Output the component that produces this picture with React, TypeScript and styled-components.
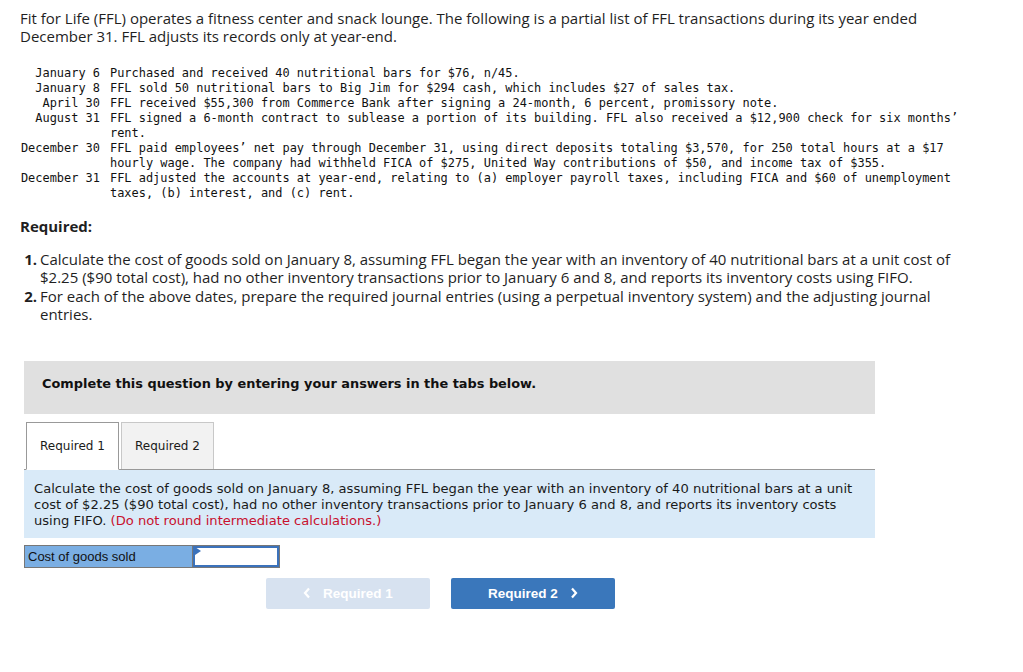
import React from "react";
import styled, { createGlobalStyle } from "styled-components";

const Global = createGlobalStyle`
  html, body { margin: 0; padding: 0; background: #fff; }
  body { font-family: "Open Sans", "Liberation Sans", sans-serif; color: #1f1f1f; }
`;

const Page = styled.div`
  padding: 9px 0 40px 20px;
  width: 970px;
`;

const Intro = styled.p`
  margin: 0;
  font-size: 15px;
  line-height: 18px;
  width: 940px;
`;

const TxTable = styled.div`
  margin-top: 21px;
  display: grid;
  grid-template-columns: 80px 860px;
  column-gap: 10px;
  font-family: "DejaVu Sans Mono", "Liberation Mono", monospace;
  font-size: 11.95px;
  line-height: 15px;
  color: #111;
`;

const TxDate = styled.div`
  text-align: right;
  white-space: nowrap;
`;

const TxText = styled.div``;

const ReqHead = styled.div`
  margin-top: 16px;
  font-size: 15px;
  line-height: 18px;
  font-weight: 700;
`;

const ReqList = styled.div`
  margin-top: 15px;
  margin-left: 4px;
  display: grid;
  grid-template-columns: 13px 1fr;
  column-gap: 3px;
  font-size: 15px;
  line-height: 18.4px;
  width: 940px;
`;

const ReqNum = styled.div`
  font-weight: 700;
  text-align: right;
`;

const ReqText = styled.div``;

const Work = styled.div`
  margin-top: 37px;
  margin-left: 4px;
  width: 851px;
`;

const Banner = styled.div`
  background: #e0e0e0;
  padding: 15px 18px 22px;
  height: 16px;
  font-family: "DejaVu Sans", Verdana, sans-serif;
  font-weight: 700;
  font-size: 12.9px;
  line-height: 16px;
  color: #111;
`;

const Tabs = styled.div`
  margin-top: 8px;
  display: flex;
  align-items: flex-end;
  padding-left: 2px;
  border-bottom: 1px solid #999;
  height: 47px;
`;

const Tab = styled.div<{ $active?: boolean }>`
  box-sizing: border-box;
  width: 93px;
  height: ${(p) => (p.$active ? "48px" : "47px")};
  margin-bottom: ${(p) => (p.$active ? "-1px" : "0")};
  margin-right: 2px;
  display: flex;
  align-items: center;
  justify-content: center;
  font-family: "DejaVu Sans", Verdana, sans-serif;
  font-size: 12px;
  color: #1a1a1a;
  background: ${(p) => (p.$active ? "#fff" : "#f2f2f2")};
  border: 1px solid ${(p) => (p.$active ? "#999" : "#c8c8c8")};
  border-bottom: ${(p) => (p.$active ? "1px solid #fff" : "none")};
`;

const Panel = styled.div`
  background: #d9eaf8;
  padding: 11px 10px 9px;
  font-family: "DejaVu Sans", Verdana, sans-serif;
  font-size: 13.1px;
  line-height: 16px;
  color: #1a1a1a;
`;

const Note = styled.span`
  color: #c8102e;
`;

const AnswerRow = styled.div`
  margin-top: 7px;
  display: flex;
  width: 256px;
  height: 23px;
  box-sizing: border-box;
  border: 1px solid #777;
`;

const AnswerLabel = styled.div`
  box-sizing: border-box;
  width: 168px;
  background: #7aaee3;
  border-right: 1px solid #777;
  font-family: "Liberation Sans", Arial, sans-serif;
  font-size: 13px;
  line-height: 21px;
  padding-left: 3px;
  color: #111;
`;

const AnswerCell = styled.div`
  position: relative;
  flex: 1;
  border: 2px solid #3b72bb;
  background: #fff;
`;

const Flag = styled.div`
  position: absolute;
  left: 0;
  top: -1px;
  width: 0;
  height: 0;
  border-top: 4px solid transparent;
  border-bottom: 4px solid transparent;
  border-left: 6px solid #3b72bb;
`;

const NavRow = styled.div`
  margin-top: 10px;
  padding-left: 242px;
  display: flex;
  gap: 21px;
`;

const NavButton = styled.div<{ $disabled?: boolean }>`
  width: 164px;
  height: 31px;
  border-radius: 2px;
  display: flex;
  align-items: center;
  justify-content: center;
  gap: 12px;
  background: ${(p) => (p.$disabled ? "#d7e2f0" : "#3a77bb")};
  color: #fff;
  font-family: "Liberation Sans", Arial, sans-serif;
  font-weight: 700;
  font-size: 13.5px;
`;

const Chevron = ({ dir }: { dir: "left" | "right" }) => (
  <svg width="8" height="12" viewBox="0 0 8 12">
    <polyline
      points={dir === "left" ? "6,1.5 2,6 6,10.5" : "2,1.5 6,6 2,10.5"}
      fill="none"
      stroke="#fff"
      strokeWidth="2.2"
    />
  </svg>
);

const txs: [string, string][] = [
  ["January 6", "Purchased and received 40 nutritional bars for $76, n/45."],
  ["January 8", "FFL sold 50 nutritional bars to Big Jim for $294 cash, which includes $27 of sales tax."],
  ["April 30", "FFL received $55,300 from Commerce Bank after signing a 24-month, 6 percent, promissory note."],
  ["August 31", "FFL signed a 6-month contract to sublease a portion of its building. FFL also received a $12,900 check for six months’ rent."],
  ["December 30", "FFL paid employees’ net pay through December 31, using direct deposits totaling $3,570, for 250 total hours at a $17 hourly wage. The company had withheld FICA of $275, United Way contributions of $50, and income tax of $355."],
  ["December 31", "FFL adjusted the accounts at year-end, relating to (a) employer payroll taxes, including FICA and $60 of unemployment taxes, (b) interest, and (c) rent."],
];

export default function App() {
  return (
    <>
      <Global />
      <Page>
        <Intro>
          Fit for Life (FFL) operates a fitness center and snack lounge. The following is a partial list of FFL
          transactions during its year ended December 31. FFL adjusts its records only at year-end.
        </Intro>
        <TxTable>
          {txs.map(([d, t]) => (
            <React.Fragment key={d}>
              <TxDate>{d}</TxDate>
              <TxText>{t}</TxText>
            </React.Fragment>
          ))}
        </TxTable>
        <ReqHead>Required:</ReqHead>
        <ReqList>
          <ReqNum>1.</ReqNum>
          <ReqText>
            Calculate the cost of goods sold on January 8, assuming FFL began the year with an inventory of 40
            nutritional bars at a unit cost of $2.25 ($90 total cost), had no other inventory transactions prior to
            January 6 and 8, and reports its inventory costs using FIFO.
          </ReqText>
          <ReqNum>2.</ReqNum>
          <ReqText>
            For each of the above dates, prepare the required journal entries (using a perpetual inventory system)
            and the adjusting journal entries.
          </ReqText>
        </ReqList>
        <Work>
          <Banner>Complete this question by entering your answers in the tabs below.</Banner>
          <Tabs>
            <Tab $active>Required 1</Tab>
            <Tab>Required 2</Tab>
          </Tabs>
          <Panel>
            Calculate the cost of goods sold on January 8, assuming FFL began the year with an inventory of 40
            nutritional bars at a unit cost of $2.25 ($90 total cost), had no other inventory transactions prior to
            January 6 and 8, and reports its inventory costs using FIFO. <Note>(Do not round intermediate calculations.)</Note>
          </Panel>
          <AnswerRow>
            <AnswerLabel>Cost of goods sold</AnswerLabel>
            <AnswerCell>
              <Flag />
            </AnswerCell>
          </AnswerRow>
          <NavRow>
            <NavButton $disabled>
              <Chevron dir="left" />
              Required 1
            </NavButton>
            <NavButton>
              Required 2
              <Chevron dir="right" />
            </NavButton>
          </NavRow>
        </Work>
      </Page>
    </>
  );
}
